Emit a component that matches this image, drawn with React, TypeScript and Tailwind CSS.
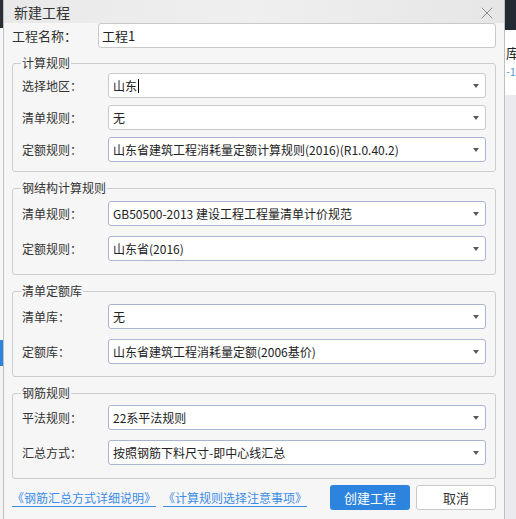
import { X } from "lucide-react";

const font = { fontFamily: '"Noto Sans CJK SC", "Noto Sans", sans-serif' };

const Arrow = () => (
	<svg width="6" height="4" viewBox="0 0 6 4" className="shrink-0">
		<path d="M0 0 L6 0 L3 4 Z" fill="#5a5a5a" />
	</svg>
);

const SelectRow = ({
	label,
	value,
	blue = true,
	caret = false,
}: {
	label: string;
	value: string;
	blue?: boolean;
	caret?: boolean;
}) => (
	<div className="flex items-center h-[25px]">
		<div className="w-[86px] shrink-0 text-[12px] text-[#333]">{label}</div>
		<div
			className={`flex-1 h-[25px] flex items-center justify-between rounded-[3px] border bg-white pl-[4px] pr-[6px] ${
				blue ? "border-[#a9b5d2]" : "border-[#c9c9c9]"
			}`}
		>
			<span className="text-[12px] text-[#222] flex items-center whitespace-nowrap">
				{value}
				{caret && <span className="inline-block w-px h-[14px] bg-black ml-px" />}
			</span>
			<Arrow />
		</div>
	</div>
);

const Group = ({ title, children, className }: { title: string; children: React.ReactNode; className: string }) => (
	<fieldset className={`border border-[#cdcdcd] rounded-[3px] px-[9px] ${className}`}>
		<legend className="-ml-px px-px text-[12px] leading-[16px] text-[#333]">{title}</legend>
		{children}
	</fieldset>
);

export default function App() {
	return (
		<div className="flex w-[516px] h-[519px] overflow-hidden bg-white" style={font}>
			{/* app behind, left edge */}
			<div className="w-[3px] shrink-0 flex flex-col">
				<div className="h-[28px] bg-[#2a2f37]" />
				<div className="h-[312px] bg-[#f7f7f7]" />
				<div className="h-[26px] bg-[#2d84de]" />
				<div className="flex-1 bg-[#f3f3f3]" />
			</div>

			{/* dialog */}
			<div className="w-[502px] shrink-0 flex flex-col border-x border-[#bfbfbf] bg-[#f6f6f6]">
				<div className="h-[23px] flex items-center justify-between pl-[10px] pr-[7px] bg-gradient-to-r from-[#e9e9e9] via-[#efefef] to-[#e6e6e6]">
					<span className="text-[14px] text-[#333] pt-[2px]">新建工程</span>
					<X size={20} strokeWidth={1} className="text-[#7a7a7a] mt-[2px]" />
				</div>

				<div className="flex flex-col px-[8px]">
					<div className="flex items-center h-[25px]">
						<div className="w-[86px] shrink-0 text-[13px] text-[#333]">工程名称：</div>
						<div className="flex-1 h-[25px] flex items-center rounded-[3px] border border-[#c9c9c9] bg-white pl-[3px]">
							<span className="text-[13px] text-[#222]">工程1</span>
						</div>
					</div>

					<Group title="计算规则" className="mt-[7px] pt-[2px] pb-[9px]">
						<div className="flex flex-col gap-[7px]">
							<SelectRow label="选择地区：" value="山东" blue={false} caret />
							<SelectRow label="清单规则：" value="无" blue={false} />
							<SelectRow label="定额规则：" value="山东省建筑工程消耗量定额计算规则(2016)(R1.0.40.2)" />
						</div>
					</Group>

					<Group title="钢结构计算规则" className="mt-[8px] pt-[5px] pb-[13px]">
						<div className="flex flex-col gap-[10px]">
							<SelectRow label="清单规则：" value="GB50500-2013 建设工程工程量清单计价规范" />
							<SelectRow label="定额规则：" value="山东省(2016)" />
						</div>
					</Group>

					<Group title="清单定额库" className="mt-[8px] pt-[5px] pb-[12px]">
						<div className="flex flex-col gap-[10px]">
							<SelectRow label="清单库：" value="无" />
							<SelectRow label="定额库：" value="山东省建筑工程消耗量定额(2006基价)" />
						</div>
					</Group>

					<Group title="钢筋规则" className="mt-[8px] pt-[4px] pb-[13px]">
						<div className="flex flex-col gap-[10px]">
							<SelectRow label="平法规则：" value="22系平法规则" />
							<SelectRow label="汇总方式：" value="按照钢筋下料尺寸-即中心线汇总" />
						</div>
					</Group>

					<div className="mt-[6px] flex items-center h-[25px]">
						<a className="text-[12px] text-[#3c8de6] underline underline-offset-[3px] whitespace-nowrap">《钢筋汇总方式详细说明》</a>
						<a className="ml-[7px] text-[12px] text-[#3c8de6] underline underline-offset-[3px] whitespace-nowrap">《计算规则选择注意事项》</a>
						<div className="flex-1" />
						<button className="w-[80px] h-[25px] rounded-[3px] bg-[#2d84de] text-white text-[13px]">创建工程</button>
						<button className="ml-[6px] w-[80px] h-[25px] rounded-[3px] border border-[#c9c9c9] bg-white text-[#333] text-[13px]">取消</button>
					</div>
				</div>
			</div>

			{/* app behind, right edge */}
			<div className="flex-1 flex flex-col overflow-hidden">
				<div className="h-[30px] bg-[#222a33]" />
				<div className="h-[65px] bg-white pl-[1px] pt-[14px] leading-[18px]">
					<div className="text-[13px] text-[#222] whitespace-nowrap">库</div>
					<div className="text-[11px] text-[#5b9be0] whitespace-nowrap">-1</div>
				</div>
				<div className="flex-1 bg-[#ebebef]" />
			</div>
		</div>
	);
}
